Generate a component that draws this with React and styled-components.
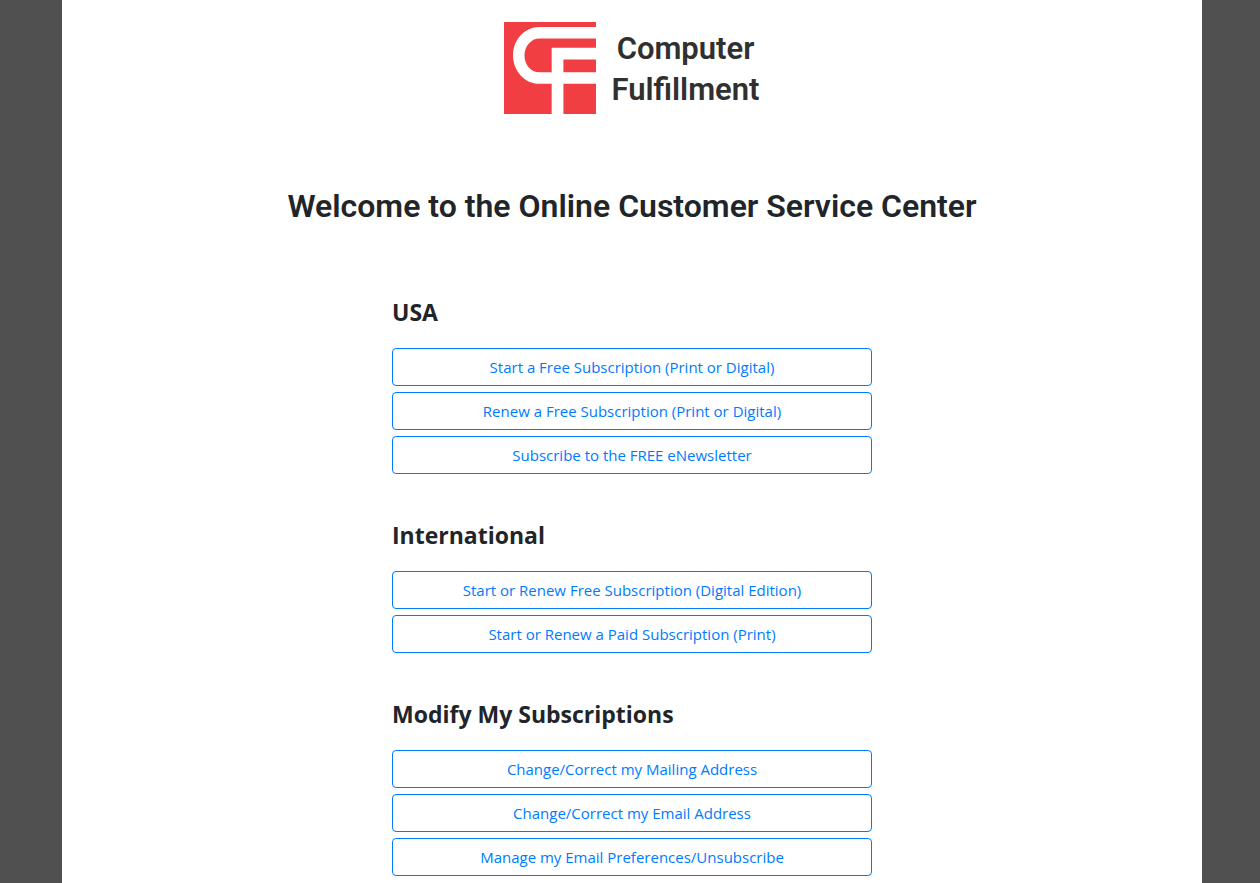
import React from 'react';
import styled, { createGlobalStyle } from 'styled-components';

const GlobalStyle = createGlobalStyle`
  *, *::before, *::after { box-sizing: border-box; }
  body {
    margin: 0;
    background: #505050;
    color: #212529;
    font-family: "Open Sans", "Noto Sans", sans-serif;
    font-size: 15px;
    line-height: 24px;
  }
`;

const Page = styled.div`
  padding-left: 4px;
`;

const Sheet = styled.main`
  max-width: 1140px;
  min-height: 100vh;
  margin: 0 auto;
  padding: 22px 16px 6px;
  background: #fff;
`;

const Brand = styled.header`
  display: flex;
  justify-content: center;
  gap: 15px;
`;

const LogoMark = styled.svg`
  display: block;
  width: 92px;
  height: 92px;
`;

const BrandName = styled.div`
  padding-top: 6px;
  color: #303030;
  font-family: Roboto, sans-serif;
  font-size: 31px;
  font-weight: 600;
  line-height: 41px;
  text-align: center;
`;

const Title = styled.h1`
  margin: 72px 0 71px;
  font-family: Roboto, sans-serif;
  font-size: 32px;
  font-weight: 600;
  line-height: 40px;
  text-align: center;
`;

const Sections = styled.div`
  display: flex;
  flex-direction: column;
  gap: 46px;
  max-width: 480px;
  margin: 0 auto;
`;

const SectionTitle = styled.h2`
  margin: 0 0 21px;
  font-size: 23px;
  font-weight: 700;
  line-height: 30px;
`;

const LinkList = styled.nav`
  display: flex;
  flex-direction: column;
  gap: 6px;
`;

const ActionLink = styled.a`
  padding: 6px 12px;
  border: 1px solid #007bff;
  border-radius: 4px;
  color: #007bff;
  text-align: center;
  text-decoration: none;

  &:hover {
    background: #007bff;
    color: #fff;
  }
`;

const sections = [
  {
    title: 'USA',
    links: [
      'Start a Free Subscription (Print or Digital)',
      'Renew a Free Subscription (Print or Digital)',
      'Subscribe to the FREE eNewsletter',
    ],
  },
  {
    title: 'International',
    links: [
      'Start or Renew Free Subscription (Digital Edition)',
      'Start or Renew a Paid Subscription (Print)',
    ],
  },
  {
    title: 'Modify My Subscriptions',
    links: [
      'Change/Correct my Mailing Address',
      'Change/Correct my Email Address',
      'Manage my Email Preferences/Unsubscribe',
    ],
  },
];

export default function App() {
  return (
    <Page>
      <GlobalStyle />
      <Sheet>
        <Brand>
          <LogoMark viewBox="0 0 274 274" aria-hidden="true">
            <rect width="274" height="274" fill="#f03e42" />
            <path
              d="M274 15H105C62 15 27 53 27 99.500S62 184 105 184H142V274H177V184H274V150H177V112H274V77H142V150H105C81 150 61 127 61 99.500S81 49 105 49H274Z"
              fill="#fff"
            />
          </LogoMark>
          <BrandName>
            Computer
            <br />
            Fulfillment
          </BrandName>
        </Brand>
        <Title>Welcome to the Online Customer Service Center</Title>
        <Sections>
          {sections.map((section) => (
            <section key={section.title}>
              <SectionTitle>{section.title}</SectionTitle>
              <LinkList aria-label={section.title}>
                {section.links.map((label) => (
                  <ActionLink key={label} href="#">
                    {label}
                  </ActionLink>
                ))}
              </LinkList>
            </section>
          ))}
        </Sections>
      </Sheet>
    </Page>
  );
}
